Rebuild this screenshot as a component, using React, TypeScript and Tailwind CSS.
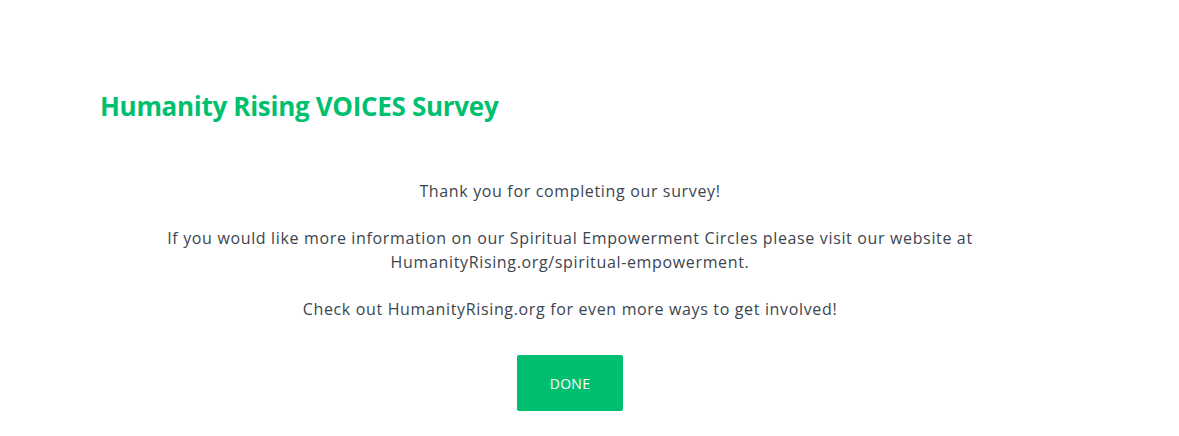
export default function App() {
  return (
    <div className="min-h-[436px] w-[1179px] bg-white" style={{ fontFamily: "'Open Sans', Lato, sans-serif" }}>
      <div className="w-[940px] ml-[100px] pt-[88px]">
        <h1 className="text-[26px] leading-[36px] font-bold text-[#00bf6f] tracking-[-0.3px]">
          Humanity Rising VOICES Survey
        </h1>
        <div className="mt-[56px] text-center text-[16px] leading-[23.5px] tracking-[0.65px] text-[#3b4550]">
          <p>Thank you for completing our survey!</p>
          <p>&nbsp;</p>
          <p>
            If you would like more information on our Spiritual Empowerment Circles please visit our website at
            <br />
            HumanityRising.org/spiritual-empowerment.
          </p>
          <p>&nbsp;</p>
          <p>Check out HumanityRising.org for even more ways to get involved!</p>
        </div>
        <div className="mt-[34px] flex justify-center">
          <button className="w-[106px] h-[56px] rounded-[2px] bg-[#00bf6f] text-white text-[14px] tracking-[0.3px]">DONE</button>
        </div>
      </div>
    </div>
  );
}
